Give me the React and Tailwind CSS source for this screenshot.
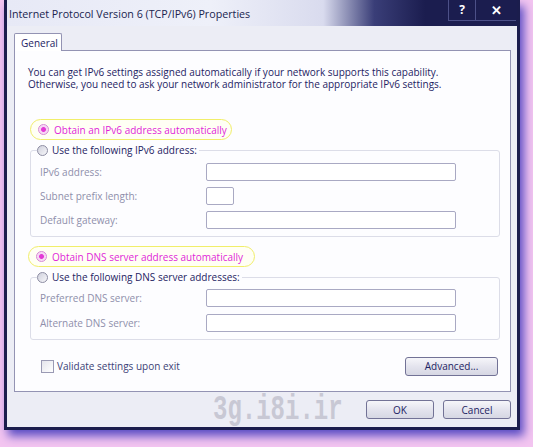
import React from 'react';

const Radio = ({ checked }) =>
    checked ? (
        <span className="w-[11px] h-[11px] rounded-full border border-[#d68ad6] bg-[radial-gradient(circle,#e23bd6_0%,#e23bd6_32%,#f6d2f3_45%,#fbeefa_100%)] shrink-0" />
    ) : (
        <span className="w-[11px] h-[11px] rounded-full border border-[#8d8da3] bg-[linear-gradient(135deg,#cfd0dc,#f7f7fa)] shrink-0" />
    );

const Field = ({ label, short }) => (
    <div className="flex items-center h-[18px]">
        <span className="w-[166px] text-[#8f8fab]">{label}</span>
        <div className={short ? 'w-[28px] h-[18px] border border-[#a9a9c3] rounded-[2px] bg-white' : 'w-[250px] h-[18px] border border-[#a9a9c3] rounded-[2px] bg-white'} />
    </div>
);

const Pill = ({ children, width }) => (
    <div className={`flex items-center h-[21px] ml-[15px] pl-[7px] gap-[5px] border border-[#f1ee6a] rounded-full bg-[#fffff4] text-[#e01fd9] whitespace-nowrap ${width}`}>
        <Radio checked />
        <span>{children}</span>
    </div>
);

const Btn = ({ children, w }) => (
    <button className={`${w} h-[19px] border border-[#727296] rounded-[3px] bg-[linear-gradient(#f6f6fa,#e4e4ee_50%,#d6d7e3)] text-[#1d2363] text-[10px]`}>
        {children}
    </button>
);

const App = () => {
    return (
        <div className="w-[533px] h-[447px] bg-[#f3c5f0] overflow-hidden font-['Open_Sans',sans-serif] text-[10px] leading-[12px] text-[#1d2363]">
            <div className="ml-[4px] w-[516px] h-[430px] flex flex-col border-x-[3px] border-b-[3px] border-[#1b1d4d] shadow-[4px_6px_9px_#5a4cc4]">
                {/* title bar */}
                <div className="h-[26px] flex items-start bg-[linear-gradient(90deg,#e7e9f6_0%,#eef0f9_40%,#d9dbee_62%,#3a3e78_72%,#1b1d4f_82%,#1b1d4f_100%)]">
                    <span className="mt-[8px] ml-[2px] text-[10.7px] text-[#20244f] whitespace-nowrap">Internet Protocol Version 6 (TCP/IPv6) Properties</span>
                    <div className="ml-auto mr-[1px] flex h-[21px] border-b border-[#4c5088]">
                        <div className="w-[28px] flex items-center justify-center border-x border-[#4c5088] text-white font-bold text-[12px]">?</div>
                        <div className="w-[40px] flex items-center justify-center text-white font-bold text-[13px]">✕</div>
                    </div>
                </div>

                {/* body */}
                <div className="flex-1 bg-[#ecedf5] pl-[7px] pr-[6px] pt-[7px] flex flex-col">
                    <div className="flex">
                        <div className="w-[48px] h-[18px] -mb-[1px] z-10 border border-b-0 border-[#9393b3] rounded-t-[2px] bg-white flex items-center pl-[6px]">General</div>
                    </div>
                    <div className="h-[342px] border border-[#9393b3] bg-[#fdfdff] flex flex-col pt-[15px]">
                        <p className="pl-[13px] whitespace-nowrap">
                            You can get IPv6 settings assigned automatically if your network supports this capability.
                            <br />
                            Otherwise, you need to ask your network administrator for the appropriate IPv6 settings.
                        </p>

                        <div className="mt-[29px] flex">
                            <Pill width="w-[202px]">Obtain an IPv6 address automatically</Pill>
                        </div>

                        <fieldset className="mt-[3px] ml-[15px] mr-[10px] border border-[#dcdde8] rounded-[3px] pl-[6px] pb-[7px]">
                            <legend className="flex items-center gap-[4px] h-[14px] bg-[#fdfdff] pr-[2px]">
                                <Radio />
                                <span>Use the following IPv6 address:</span>
                            </legend>
                            <div className="pl-[3px] pt-[6px] flex flex-col gap-[6px]">
                                <Field label="IPv6 address:" />
                                <Field label="Subnet prefix length:" short />
                                <Field label="Default gateway:" />
                            </div>
                        </fieldset>

                        <div className="mt-[9px] flex">
                            <div className="-ml-[2px]">
                                <Pill width="w-[227px]">Obtain DNS server address automatically</Pill>
                            </div>
                        </div>

                        <fieldset className="mt-[3px] ml-[15px] mr-[10px] border border-[#dcdde8] rounded-[3px] pl-[6px] pb-[7px]">
                            <legend className="flex items-center gap-[4px] h-[14px] bg-[#fdfdff] pr-[2px]">
                                <Radio />
                                <span>Use the following DNS server addresses:</span>
                            </legend>
                            <div className="pl-[3px] pt-[5px] flex flex-col gap-[7px]">
                                <Field label="Preferred DNS server:" />
                                <Field label="Alternate DNS server:" />
                            </div>
                        </fieldset>

                        <div className="mt-[16px] flex items-center h-[20px] pl-[26px] pr-[12px]">
                            <span className="w-[13px] h-[13px] border border-[#9a9ab4] bg-[linear-gradient(135deg,#e4e4ec,#ffffff)]" />
                            <span className="ml-[3px] text-[#3c4276]">Validate settings upon exit</span>
                            <div className="ml-auto">
                                <Btn w="w-[93px]">Advanced...</Btn>
                            </div>
                        </div>
                    </div>

                    <div className="mt-[8px] flex items-center h-[19px]">
                        <span className="ml-[199px] font-['Liberation_Mono',monospace] font-bold text-[24px] leading-[19px] text-[#c8c8d4] scale-y-[1.45] origin-center">3g.i8i.ir</span>
                        <div className="ml-auto flex gap-[9px]">
                            <Btn w="w-[68px]">OK</Btn>
                            <Btn w="w-[68px]">Cancel</Btn>
                        </div>
                    </div>
                </div>
            </div>
        </div>
    );
};

export default App;
